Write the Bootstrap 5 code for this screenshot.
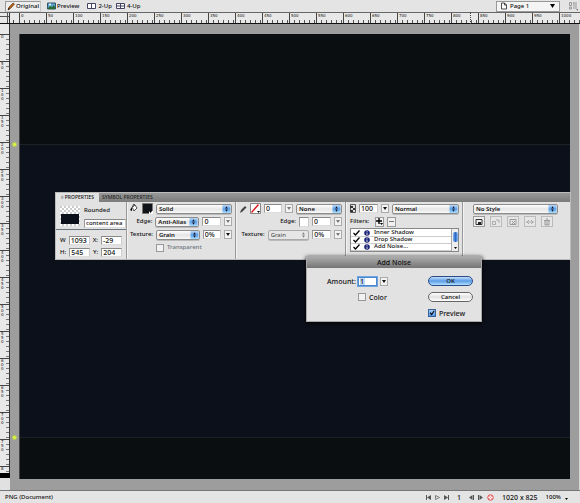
<!DOCTYPE html>
<html lang="en">
<head>
<meta charset="utf-8">
<meta name="viewport" content="width=device-width, initial-scale=1">
<title>PNG (Document)</title>
<link href="https://cdn.jsdelivr.net/npm/bootstrap@5.3.0/dist/css/bootstrap.min.css" rel="stylesheet">
<style>
body{font:500 6px/9px "Noto Sans","Open Sans",sans-serif;color:#111;background:#e1e1e1}
svg{display:block;flex:none}
button{font:inherit;color:inherit}
.tools{height:12px;padding:0 2px 0 5px;background:#e4e4e4;flex:none}
.tool{border:1px solid transparent;background:none;padding:0 1px;height:11px;line-height:9px;gap:1px}
.tool.active{border-color:#999 #c4c4c4 #ccc #999;background:#eee}
.page-pick{width:64px;border:1px solid #999;background:#f4f4f4;height:11px}
.page-pick select{appearance:none;border:0;background:none;font:inherit;padding:0 0 0 3px;color:#111;min-width:0}
.hruler{height:12px;border-top:1px solid #666;border-bottom:1px solid #111;background:#e8e8e8;overflow:hidden;flex:none}
.corner{width:10px;border-right:1px solid #333;background:linear-gradient(#555,#555) 0 3px/100% 1px no-repeat,linear-gradient(#555,#555) 7px 0/1px 100% no-repeat}
.lead-in{width:9px;background:linear-gradient(#444,#444) 3px 100%/1px 3px no-repeat}
.hcell{flex:0 0 27px;border-left:1px solid #444;font:4px/5px "DejaVu Sans",sans-serif;color:#111;padding-left:1px;
 background:repeating-linear-gradient(90deg,transparent 0 4px,#555 4px 5px) 0 100%/100% 3px no-repeat}
.work{flex:1 1 0;min-height:0}
.vruler{width:10px;border-right:1px solid #333;background:#e8e8e8;overflow:hidden;flex:1 1 0;min-height:0}
.vruler .lead-in{width:auto;height:10px;background:none}
.vcell{flex:0 0 27px;border-top:1px solid #444;font:4px/4px "DejaVu Sans",sans-serif;color:#111;
 background:repeating-linear-gradient(180deg,transparent 0 4px,#777 4px 5px) 100% 0/3px 100% no-repeat}
.vcell span{display:block;width:3px;word-break:break-all;margin-left:1px}
.vend{height:17px;border-top:5px solid #000;background:#e1e1e1}
.stage{background:#9d9d9d;padding:10px 9px 11px 9px;border-right:1px solid #d8d8d8}
.paper{background:#0a0e11;border-left:1px solid #444}
.slice-a{flex:110}.slice-b{flex:294;background:#0c101a;border:solid #1d2226;border-width:1px 0}.slice-c{flex:41}
.knob{position:absolute;left:-8px;width:5px;height:5px;border-radius:50%;background:#d8f545;border:1px solid #b9cb55}
.knob-a{top:-3px}.knob-b{bottom:-3px}
.marker{position:absolute;left:470px;top:12px;height:12px;border-left:1px dotted #444}
/* floating panel */
.props{position:absolute;left:55px;right:9px;top:192px;background:#e2e2e2;border:1px solid #bbb}
.tabs{height:9px;background:linear-gradient(#989898,#7b7b7b);font:500 5px/9px "Noto Sans",sans-serif}
.tabs button{border:0;padding:0 2px;height:9px;background:none;color:#222}
.tabs button.active{background:#e2e2e2;color:#111;width:43px}
.tabs button+button{padding-left:3px}
.cells{display:grid;grid-template-columns:71px 109px 110px 117px 1fr;height:57px}
.sect{padding:0 3px 0 3px;border-right:1px solid #999;min-width:0}
.sect:last-child{border:0;padding-left:9px}
.sect+.sect{border-left:1px solid #f2f2f2}
.line{display:flex;align-items:center;height:13px;gap:3px;white-space:nowrap}
.tag{width:22px;text-align:right;display:flex;justify-content:flex-end}
.tag.wide{width:25px}
.box{height:9px;width:19px;border:1px solid;border-color:#888 #ccc #ddd #999;background:#fff;font:inherit;font-size:7px;padding:0 1px;color:#111;border-radius:0;min-width:0}
.box.long{width:42px;font-size:6px}
.box.coord{width:22px}
.drop{width:8px;height:9px;border:1px solid #aaa;background:#f3f3f3;padding:0;display:flex;align-items:center;justify-content:center;flex:none}
.drop::after{content:"";border:2px solid transparent;border-top:3px solid #111;border-bottom:0}
.drop.dim::after{border-top-color:#777}
.pick{appearance:none;height:10px;border:1px solid #8c8c8c;border-radius:2px;font:inherit;font-weight:600;padding:0 9px 0 2px;color:#111;min-width:0;line-height:8px;
 background:url("data:image/svg+xml,%3Csvg xmlns='http://www.w3.org/2000/svg' viewBox='0 0 9 9'%3E%3Cdefs%3E%3ClinearGradient id='g' x2='0' y2='1'%3E%3Cstop stop-color='%23b9d9f8'/%3E%3Cstop offset='.5' stop-color='%235a9ee6'/%3E%3Cstop offset='1' stop-color='%23a9dcff'/%3E%3C/linearGradient%3E%3C/defs%3E%3Cpath fill='url(%23g)' d='M0 0h9v9H0z'/%3E%3Cpath fill='%23112' d='M3 4l1.500-2.500L6 4zM3 5.200h3L4.500 7.700z'/%3E%3C/svg%3E") right center/9px 100% no-repeat,linear-gradient(#fff,#e6e6e6 50%,#f8f8f8);box-shadow:0 1px #bbb}
.pick:disabled{opacity:1;color:#444;font-weight:400;border-color:#aaa;
 background:url("data:image/svg+xml,%3Csvg xmlns='http://www.w3.org/2000/svg' viewBox='0 0 9 9'%3E%3Cpath fill='%23777' d='M3 4l1.500-2.500L6 4zM3 5.200h3L4.500 7.700z'/%3E%3C/svg%3E") right center/9px 100% no-repeat,#e6e6e6}
.w45{width:45px}.w48{width:48px}.w42{width:42px}.w85{width:85px}
.swatch{width:11px;height:11px;flex:none}
.tick{appearance:none;width:8px;height:8px;border:1px solid #999;background:#f2f2f2;margin:0;flex:none}
.tick:checked{border-color:#35629b;background:url("data:image/svg+xml,%3Csvg xmlns='http://www.w3.org/2000/svg' viewBox='0 0 8 8'%3E%3Cpath fill='none' stroke='%23001' stroke-width='1.500' d='M1.500 3.500L3.500 6 7 1'/%3E%3C/svg%3E") center/100%,linear-gradient(#a8cdf3,#5596de)}
.mini{width:9px;height:10px;border:1px solid #999;background:#f0f0f0;padding:0;display:flex;align-items:center;justify-content:center;flex:none}
.mini.big{width:12px;height:11px}
.mini.big+.mini.big{border-color:#bbb;background:#e6e6e6}
.styles{gap:5px}
.fx{width:109px;height:24px;border:1px solid #888;background:#fff;overflow:hidden;display:flex}
.fx li{height:7px;line-height:7px;display:flex;align-items:center;gap:4px;padding-left:2px;box-shadow:0 1px #ccc}
.bar{width:7px;background:#eee;border-left:1px solid #aaa;display:flex;flex-direction:column;align-items:center;justify-content:space-between;padding:3px 0 1px}
.thumb-b{width:5px;height:10px;border-radius:2px;background:linear-gradient(90deg,#7fb2f0,#2c68c4,#8ac0f5)}
.dialog-w{position:absolute;left:306px;top:256px;width:176px;background:#e2e2e2;border:1px solid #aaa;box-shadow:0 1px 4px #000;font-size:7px}
.dialog-t{height:11px;background:linear-gradient(#ababab,#757575);text-align:center;line-height:11px}
.dialog-b{padding:5px 8px 0 20px}
.dialog-b .line{height:16px}
.caption-w{width:28px}
.pill{width:45px;height:10px;border:1px solid #666;border-radius:5px;background:linear-gradient(#fff,#e2e2e2 50%,#fff);line-height:8px;padding:0;text-align:center;font-size:6px}
.pill.go{border-color:#2b4c86;background:linear-gradient(#c4defa,#5c9de6 50%,#aee0ff)}
.box.focus{border-color:#4b87cc;box-shadow:0 0 0 1px #6fa5e0;background:linear-gradient(#bcd7f7,#bcd7f7) 1px 0/5px 100% no-repeat #fff}
.status{height:13px;background:#e4e4e4;border-top:1px solid #777;padding:0 12px 0 5px;flex:none}
.status button{border:0;background:none;padding:0;height:9px;display:flex;align-items:center}
.dims{font-size:7px}
</style>
</head>
<body>
<main class="d-flex flex-column vh-100 position-relative overflow-hidden">
<header class="tools d-flex align-items-center">
 <button class="tool active d-flex align-items-center"><svg width="8" height="9" viewBox="0 0 8 9"><path d="M1 8l1-3 4-4 1.500 1L4 6z" fill="#b5651d" stroke="#5b2a08" stroke-width=".6"/><path d="M1 8l.5-2 1.500 1z" fill="#111"/></svg>Original</button>
 <button class="tool d-flex align-items-center ms-1"><svg width="9" height="8" viewBox="0 0 9 8"><path d="M.5 1h8v6h-8z" fill="#58a6d8" stroke="#356"/><path d="M1 6l2-2 2 1 2-2 1 3v1H1z" fill="#286a30"/><circle cx="3" cy="2.500" r="1" fill="#fff"/></svg>Preview</button>
 <button class="tool d-flex align-items-center ms-1"><svg width="10" height="8" viewBox="0 0 10 8"><path d="M.5 1.500h8v5h-8zM4.500 1v6" fill="#fff" stroke="#446"/></svg>2-Up</button>
 <button class="tool d-flex align-items-center"><svg width="10" height="8" viewBox="0 0 10 8"><path d="M.5 1.500h8v5h-8zM4.500 1v6M0 4h9" fill="#fff" stroke="#446"/></svg>4-Up</button>
 <div class="page-pick d-flex align-items-center ms-auto px-1"><svg width="6" height="8" viewBox="0 0 6 8"><path d="M.5 1h3l2 2v4h-5zM3.500 1v2h2" fill="#fff" stroke="#222" stroke-width=".8"/></svg><select class="flex-fill" aria-label="Page"><option>Page 1</option></select><svg width="5" height="4" viewBox="0 0 5 4"><path d="M0 0h5L2.500 4z"/></svg></div>
 <svg class="ms-2" width="10" height="10" viewBox="0 0 10 10"><path d="M1.500 1.500h2v3h-2zM1.500 6h2v2h-2zM6 1v7M8 1v7M5 2h1" fill="none" stroke="#999"/><path d="M8 8h2v2z" fill="#777"/></svg>
</header>
<div class="hruler d-flex"><div class="corner flex-shrink-0"></div><div class="lead-in flex-shrink-0"></div><div id="hr" class="d-flex"></div></div>
<i class="marker"></i>
<div class="work d-flex">
 <div class="d-flex flex-column"><div class="vruler d-flex flex-column" id="vr"><div class="lead-in flex-shrink-0"></div></div><div class="vend flex-shrink-0"></div></div>
 <div class="stage d-flex flex-fill">
  <div class="paper d-flex flex-column flex-fill"><div class="slice-a"></div><div class="slice-b position-relative"><i class="knob knob-a"></i><i class="knob knob-b"></i></div><div class="slice-c"></div></div>
 </div>
</div>
<footer class="status d-flex align-items-center">
 <span class="me-auto">PNG (Document)</span>
 <div class="d-flex align-items-center gap-1">
 <button aria-label="First"><svg width="5" height="5" viewBox="0 0 5 5"><path d="M0 0h1v5H0zM5 0v5L1 2.500z" fill="#555"/></svg></button>
 <button aria-label="Play"><svg width="5" height="5" viewBox="0 0 5 5"><path d="M.5.5v4l4-2z" fill="none" stroke="#666" stroke-width=".8"/></svg></button>
 <button aria-label="Last"><svg width="5" height="5" viewBox="0 0 5 5"><path d="M4 0h1v5H4zM0 0v5l4-2.500z" fill="#555"/></svg></button>
 <span class="dims px-1">1</span>
 <button aria-label="Previous"><svg width="5" height="5" viewBox="0 0 5 5"><path d="M3.500 0v5L0 2.500zM4 0h1v5H4z" fill="#555"/></svg></button>
 <button aria-label="Next"><svg width="5" height="5" viewBox="0 0 5 5"><path d="M1.500 0v5L5 2.500zM0 0h1v5H0z" fill="#555"/></svg></button>
 <button aria-label="Stop"><svg width="7" height="7" viewBox="0 0 7 7"><circle cx="3.500" cy="3.500" r="2.700" fill="#fff" stroke="#d33"/><path d="M2 2l3 3M5 2L2 5" stroke="#e88" stroke-width=".7"/></svg></button>
 </div>
 <span class="dims ms-2">1020 x 825</span><button class="ms-2">100%<svg class="ms-1" width="3" height="5" viewBox="0 0 3 5"><path d="M0 3h3L1.500 5z"/></svg></button>
</footer>

<section class="props">
 <div class="tabs d-flex"><button class="active">◊ PROPERTIES</button><button>SYMBOL PROPERTIES</button></div>
 <div class="cells">
  <div class="sect px-0">
   <div class="d-flex px-1 pt-1" style="height:27px">
    <svg class="me-1" width="20" height="20" viewBox="0 0 20 20"><defs><pattern id="ck" width="4" height="4" patternUnits="userSpaceOnUse"><path d="M0 0h4v4H0z" fill="#fff"/><path d="M0 0h2v2H0zM2 2h2v2H2z" fill="#ccc"/></pattern></defs><path d="M0 0h20v20H0z" fill="url(#ck)"/><path d="M1 8h18v10H1z" fill="#0b101a"/></svg>
    <div><div>Rounded</div><input class="box long d-block mt-1" aria-label="Name" value="content area"></div>
   </div>
   <div class="border-top border-secondary px-1 pt-1">
    <div class="line" style="height:12px"><label for="w">W</label><input class="box coord ms-auto" id="w" value="1093"><label for="x">X:</label><input class="box coord" id="x" value="-29"></div>
    <div class="line" style="height:12px"><label for="h">H:</label><input class="box coord ms-auto" id="h" value="545"><label for="y">Y:</label><input class="box coord" id="y" value="204"></div>
   </div>
  </div>
  <div class="sect">
   <div class="line"><span class="tag"><svg width="8" height="9" viewBox="0 0 8 9"><path d="M2 4l3-2 2 3-3 3zM3 4V2q1-2 2 0" fill="#fff" stroke="#222" stroke-width=".8"/><path d="M0 7l2-3v4z"/></svg><svg class="swatch ms-1" viewBox="0 0 11 11"><path d="M.5.5h10v10H.5z" fill="#10131a" stroke="#777"/><path d="M7 8h4v3H7z" fill="#fff"/><path d="M7 8h3L8.500 10z"/></svg></span><select class="pick flex-fill" aria-label="Fill"><option>Solid</option></select></div>
   <div class="line"><label class="tag" for="e1">Edge:</label><select class="pick w45" id="e1"><option>Anti-Alias</option></select><input class="box" aria-label="Edge amount" value="0"><button class="drop dim" aria-label="Edge menu"></button></div>
   <div class="line"><label class="tag" for="t1">Texture:</label><select class="pick w45" id="t1"><option>Grain</option></select><input class="box" aria-label="Texture amount" value="0%"><button class="drop" aria-label="Texture menu"></button></div>
   <div class="line text-secondary"><span class="tag"></span><input class="tick" type="checkbox" id="tr"><label for="tr">Transparent</label></div>
  </div>
  <div class="sect">
   <div class="line justify-content-end"><svg width="7" height="8" viewBox="0 0 7 8"><path d="M0 8l1-3 4-4 1.500 1.500L2.500 6.500z" fill="#444"/></svg><svg class="swatch" viewBox="0 0 11 11"><path d="M.5.5h10v10H.5z" fill="#fff" stroke="#888"/><path d="M1.500 9.500l7-8" stroke="#e02020" stroke-width="1.500"/><path d="M7 8h3L8.500 10z"/></svg><input class="box" aria-label="Stroke size" value="0"><button class="drop dim" aria-label="Stroke menu"></button><select class="pick w48" aria-label="Stroke"><option>None</option></select></div>
   <div class="line justify-content-end"><span>Edge:</span><span class="box" style="width:10px;height:10px"></span><input class="box" aria-label="Stroke edge" value="0"><button class="drop dim" aria-label="Stroke edge menu"></button></div>
   <div class="line justify-content-end"><label class="tag wide" for="t2">Texture:</label><select class="pick w42" id="t2" disabled><option>Grain</option></select><input class="box" aria-label="Stroke texture" value="0%"><button class="drop dim" aria-label="Stroke texture menu"></button></div>
  </div>
  <div class="sect">
   <div class="line"><svg width="6" height="9" viewBox="0 0 6 9"><path d="M.5.5h5v8h-5z" fill="#ddd" stroke="#555"/><path d="M0 2h3v2H0zM0 6h3v2H0zM3 4h2v2H3z" fill="#333"/></svg><input class="box" aria-label="Opacity" value="100"><button class="drop" aria-label="Opacity menu"></button><select class="pick flex-fill" aria-label="Blend"><option>Normal</option></select></div>
   <div class="line"><span class="tag justify-content-start">Filters:</span><button class="mini" aria-label="Add"><svg width="7" height="7" viewBox="0 0 7 7"><path d="M3 0v6M0 3h6" stroke="#000" stroke-width="1.400"/><path d="M4 5h3L5.500 7z"/></svg></button><button class="mini" aria-label="Remove"><svg width="5" height="5" viewBox="0 0 5 5"><path d="M0 2.500h5" stroke="#777"/></svg></button></div>
   <div class="fx"><ul class="list-unstyled mb-0 flex-fill" id="fx"></ul><div class="bar"><i class="thumb-b"></i><svg width="3" height="3" viewBox="0 0 3 3"><path d="M0 0h3L1.500 2z"/></svg></div></div>
  </div>
  <div class="sect">
   <div class="line"><select class="pick w85" aria-label="Style"><option>No Style</option></select></div>
   <div class="line styles">
    <button class="mini big" aria-label="New style"><svg width="8" height="8" viewBox="0 0 8 8"><path d="M1 1.500h6v5H1z" fill="none" stroke="#333"/><path d="M3 4h3v3H3z" fill="#222"/></svg></button>
    <button class="mini big" aria-label="Redefine style"><svg width="8" height="8" viewBox="0 0 8 8"><path d="M.5 3.500h3v3h-3zM4 2h3v3" fill="none" stroke="#aaa"/></svg></button>
    <button class="mini big" aria-label="Clear overrides"><svg width="8" height="8" viewBox="0 0 8 8"><path d="M1 1.500h6v5H1zM3 3l3 3M6 3L3 6" fill="none" stroke="#999"/></svg></button>
    <button class="mini big" aria-label="Break link"><svg width="8" height="8" viewBox="0 0 8 8"><path d="M3 2L1 4l2 2M5 2l2 2-2 2M0 4h8" fill="none" stroke="#aaa"/></svg></button>
    <button class="mini big" aria-label="Delete"><svg width="8" height="8" viewBox="0 0 8 8"><path d="M1 2.500h6M2 3v4h4V3M3 1h2M4 3v4" fill="none" stroke="#999"/></svg></button>
   </div>
  </div>
 </div>
</section>

<section class="dialog-w" role="dialog" aria-label="Add Noise">
 <div class="dialog-t">Add Noise</div>
 <div class="dialog-b d-flex justify-content-between">
  <div>
   <div class="line"><label class="caption-w text-end" for="am">Amount:</label><input class="box focus" id="am" value="1"><button class="drop" aria-label="Amount menu"></button></div>
   <div class="line"><span class="caption-w"></span><input class="tick" type="checkbox" id="co"><label for="co">Color</label></div>
  </div>
  <div>
   <div class="line"><button class="pill go">OK</button></div>
   <div class="line"><button class="pill">Cancel</button></div>
   <div class="line"><input class="tick" type="checkbox" id="pv" checked><label for="pv">Preview</label></div>
  </div>
 </div>
</section>
</main>
<script>
const hr=document.getElementById('hr'),vr=document.getElementById('vr');
for(let n=0;n<=1000;n+=50)hr.insertAdjacentHTML('beforeend',`<div class="hcell">${n}</div>`);
for(let n=0;n<=750;n+=50)vr.insertAdjacentHTML('beforeend',`<div class="vcell"><span>${n}</span></div>`);
vr.insertAdjacentHTML('beforeend','<div class="vcell"><span>8</span></div>');
for(const t of ['Inner Shadow','Drop Shadow','Add Noise...'])document.getElementById('fx').insertAdjacentHTML('beforeend',
`<li><svg width="7" height="6" viewBox="0 0 7 6"><path d="M.5 3L2.500 5 6.500.5" fill="none" stroke="#000" stroke-width="1.300"/></svg><svg width="6" height="6" viewBox="0 0 6 6"><circle cx="3" cy="3" r="2.800" fill="#1c2478"/><path d="M3 2.500V5M3 1v.8" stroke="#fff" stroke-width=".8"/></svg><span>${t}</span></li>`);
</script>
<script src="https://cdn.jsdelivr.net/npm/bootstrap@5.3.0/dist/js/bootstrap.bundle.min.js"></script>
</body>
</html>
